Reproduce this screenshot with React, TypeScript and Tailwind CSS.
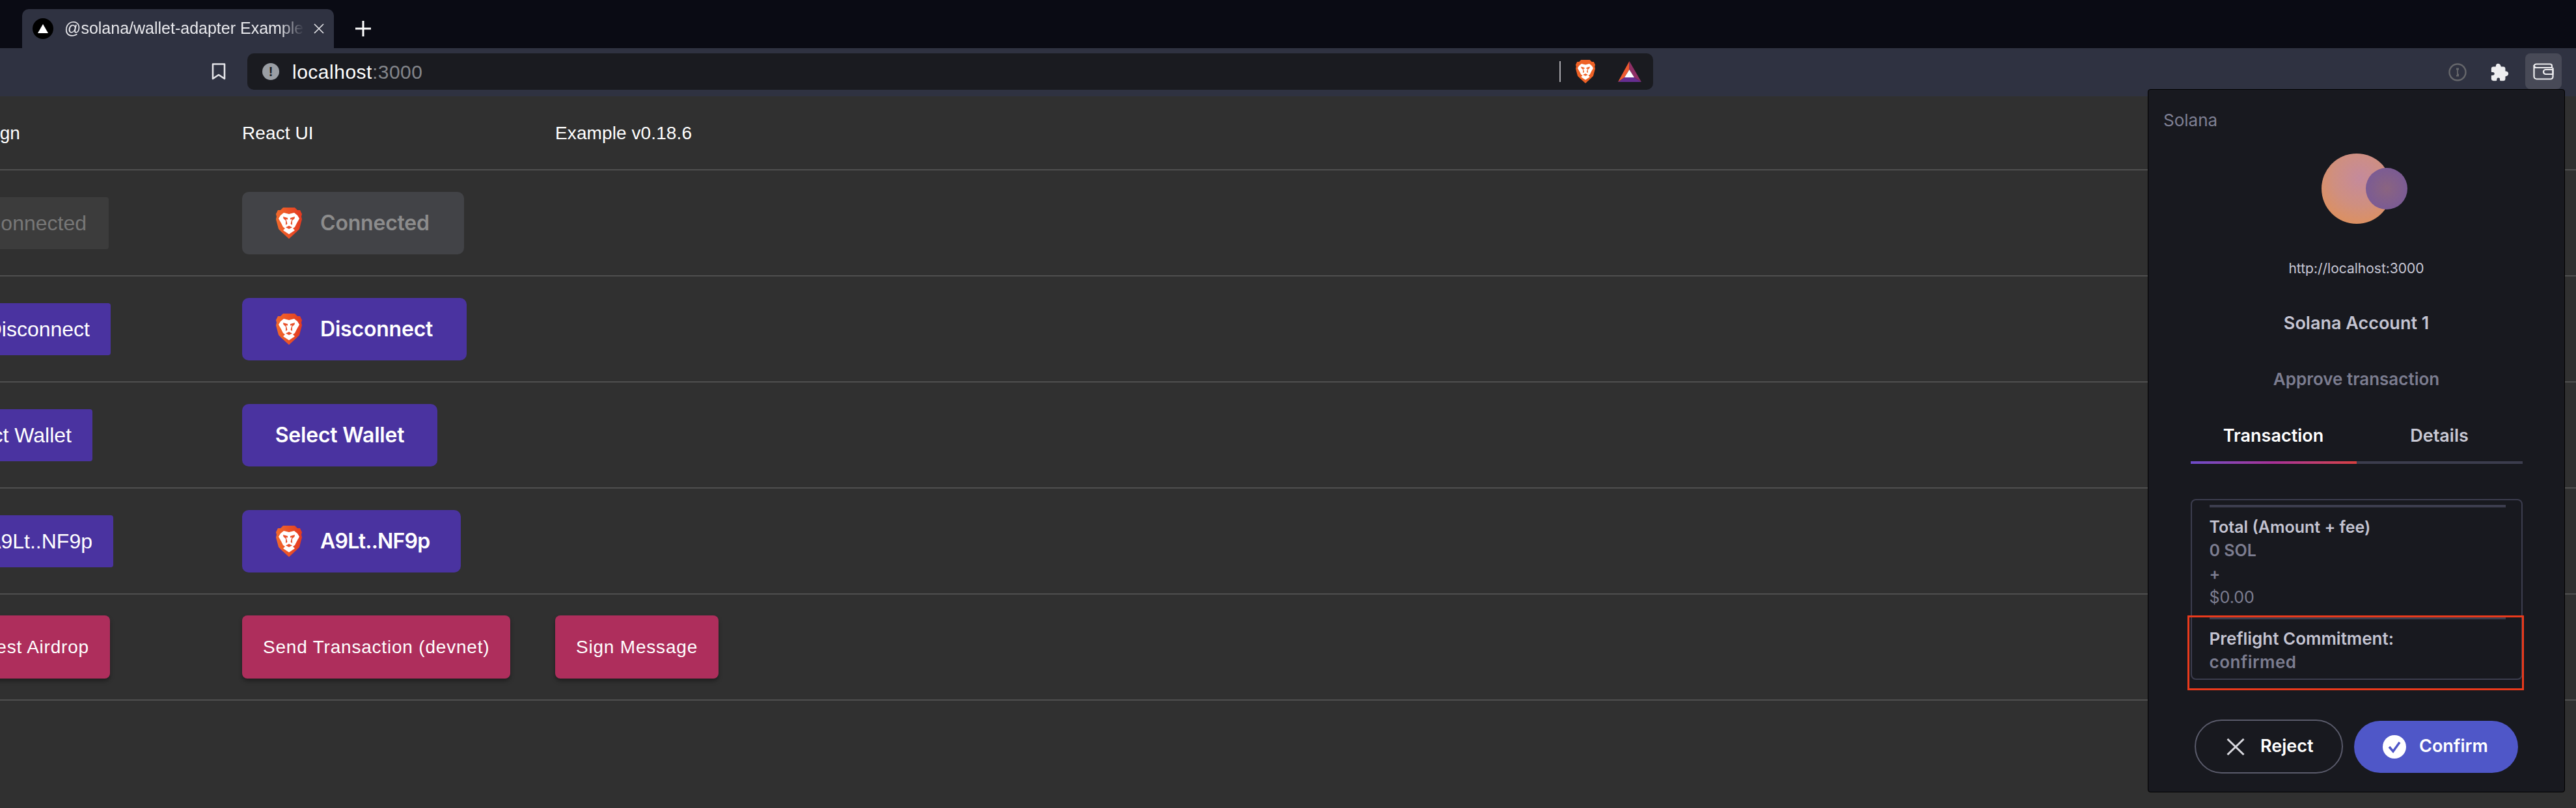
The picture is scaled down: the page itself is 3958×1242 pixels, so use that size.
import React from "react";
import { IoExtensionPuzzle } from "react-icons/io5";

function Brave({ flat, id, className }: { flat?: boolean; id: string; className: string }) {
  return (
    <svg viewBox="0 0 40 48" className={className}>
      <defs>
        <linearGradient id={id} x1="0" y1="0" x2="1" y2="0">
          <stop offset="0" stopColor="#f26a2b" />
          <stop offset="1" stopColor="#e33a22" />
        </linearGradient>
      </defs>
      <path
        d="M11 0H29L33 4L37 4L40 10L39 14L40 18L36 33L31 38L20 48L9 38L4 33L0 18L1 14L0 10L3 4L7 4Z"
        fill={flat ? "#ee6125" : `url(#${id})`}
      />
      <path d="M7 12L12 8L20 10L28 8L33 12L36 17L32 24L29 30L26 32L29 35L20 41L11 35L14 32L11 30L8 24L4 17Z" fill="#fff" />
      <path d="M11 14L18 16V18.500L15.500 18L17.500 25L15 27L15 20L11.500 17Z M29 14L22 16V18.500L24.500 18L22.500 25L25 27L25 20L28.500 17Z M15 30.500L20 28L25 30.500L20 33Z" fill={flat ? "#ee6125" : "#e8502a"} />
    </svg>
  );
}

function Bat() {
  return (
    <svg viewBox="0 0 36 32" className="h-[32px] w-[36px]">
      <polygon points="17.5,0 0,32 10,25 17.5,13" fill="#ee5a30" />
      <polygon points="17.5,0 36,32 25,25 17.5,13" fill="#8f2f66" />
      <polygon points="0,32 36,32 25,25 10,25" fill="#662d91" />
      <polygon points="17.5,13 25,25 10,25" fill="#ffffff" />
    </svg>
  );
}

const lineCol1 = "flex items-center justify-end";
const uiBtn = "flex h-[96px] items-center whitespace-nowrap rounded-[10px] font-['Inter',sans-serif] text-[32px] font-semibold tracking-[-0.2px]";
const oldBtn = "flex h-[80px] shrink-0 items-center whitespace-nowrap rounded-[4px] bg-[#4a33a0] px-[32px] font-['Liberation_Sans',sans-serif] text-[32px] text-white";
const pinkBtn = "flex h-[97px] shrink-0 items-center whitespace-nowrap rounded-[8px] bg-[#ae2e5c] px-[32px] font-['Liberation_Sans',sans-serif] text-[28px] tracking-[0.8px] text-white shadow-[0_4px_6px_rgba(0,0,0,0.35)]";
const row = "grid h-[163px] grid-cols-[372px_481px_1fr] items-center border-b-2 border-[#4f4f4f]";

export default function App() {
  return (
    <div className="relative flex h-[1242px] w-[3958px] flex-col overflow-hidden bg-[#303030] font-['Liberation_Sans',sans-serif]">
      <div className="flex h-[74px] items-start bg-[#0a0b14] pl-[34px] pt-[14px]">
        <div className="flex h-[60px] w-[479px] items-center rounded-t-[10px] bg-[#2f3241] pl-[16px]">
          <div className="flex h-[32px] w-[32px] shrink-0 items-center justify-center rounded-full bg-black">
            <svg viewBox="0 0 16 14" className="h-[14px] w-[16px]"><polygon points="8,0 16,14 0,14" fill="#fff" /></svg>
          </div>
          <div className="ml-[17px] w-[368px] overflow-hidden whitespace-nowrap text-[25px] text-[#e8e8ec] [mask-image:linear-gradient(to_right,black_90%,transparent)]">@solana/wallet-adapter Example</div>
          <svg viewBox="0 0 16 16" className="ml-[15px] h-[16px] w-[16px]"><path d="M1 1L15 15M15 1L1 15" stroke="#e8e8ec" strokeWidth="1.6" /></svg>
        </div>
        <svg viewBox="0 0 24 24" className="ml-[33px] mt-[18px] h-[24px] w-[24px]"><path d="M12 0V24M0 12H24" stroke="#fff" strokeWidth="3" /></svg>
      </div>

      <div className="flex h-[74px] items-start bg-[#2f3241] pl-[325px] pr-[22px] pt-[8px]">
        <svg viewBox="0 0 22 26" className="mt-[15px] h-[26px] w-[22px]"><path d="M2 1.5H20V24L11 18L2 24Z" fill="none" stroke="#e4e4e8" strokeWidth="2.6" strokeLinejoin="round" /></svg>
        <div className="ml-[33px] flex h-[56px] w-[2160px] items-center rounded-[10px] bg-[#1a1b20] pl-[23px] pr-[18px]">
          <div className="flex h-[26px] w-[26px] items-center justify-center rounded-full bg-[#9a9ea4] text-[20px] font-bold leading-none text-[#1a1b20]">!</div>
          <div className="ml-[20px] text-[30px] tracking-[0.5px] text-white">localhost<span className="text-[#83858a]">:3000</span></div>
          <div className="ml-auto h-[32px] w-[2px] bg-[#a8a8ac]" />
          <Brave flat id="b0" className="ml-[22px] h-[36px] w-[32px]" />
          <div className="ml-[34px]"><Bat /></div>
        </div>
        <svg viewBox="0 0 28 28" className="ml-[1222px] mt-[15px] h-[28px] w-[28px]">
          <circle cx="14" cy="14" r="12.5" fill="none" stroke="#66676b" strokeWidth="2.4" />
          <path d="M12 7.5h4v3h-1.2v6H16v4h-4v-2h1v-8h-1z" fill="#66676b" />
        </svg>
        <IoExtensionPuzzle className="ml-[36px] mt-[14px] h-[30px] w-[30px] text-[#eeeef0]" />
        <div className="ml-[24px] flex h-[55px] w-[56px] items-center justify-center rounded-[8px] bg-[#484a57]">
          <svg viewBox="0 0 32 26" className="h-[26px] w-[32px]" fill="none" stroke="#eeeef0" strokeWidth="2.2" strokeLinejoin="round">
            <path d="M5 1.5H26a3 3 0 0 1 3 3V7H5a3.5 3.5 0 0 1-3.5-3v16.500a4 4 0 0 0 4 4H27a3.500 3.500 0 0 0 3.500-3.500V7" />
            <path d="M1.500 5a3.500 3.500 0 0 1 3.500-3.500" />
            <path d="M30.500 10H19.500a3.500 3.500 0 0 0 0 7H30.500Z" />
          </svg>
        </div>
      </div>

      <div className="flex flex-col text-white">
        <div className="grid h-[114px] grid-cols-[372px_481px_1fr] items-center border-b-2 border-[#4f4f4f] pt-[2px] text-[28px] tracking-[0.1px]">
          <div className="flex justify-end pr-[341px]">Sign</div>
          <div>React UI</div>
          <div>Example v0.18.6</div>
        </div>

        <div className={row}>
          <div className={`${lineCol1} pr-[205px]`}>
            <div className="flex h-[80px] shrink-0 items-center whitespace-nowrap rounded-[4px] bg-[#3c3c3c] px-[34px] text-[32px] text-[#777777]">Connected</div>
          </div>
          <div><div className={`${uiBtn} w-[341px] bg-[#424347] pl-[52px] text-[#8c8c8c]`}><Brave id="b1" className="h-[48px] w-[40px]" /><span className="ml-[28px]">Connected</span></div></div>
          <div />
        </div>

        <div className={row}>
          <div className={`${lineCol1} pr-[202px]`}><div className={oldBtn}>Disconnect</div></div>
          <div><div className={`${uiBtn} w-[345px] bg-[#4a33a0] pl-[52px] text-white`}><Brave id="b2" className="h-[48px] w-[40px]" /><span className="ml-[28px]">Disconnect</span></div></div>
          <div />
        </div>

        <div className={row}>
          <div className={`${lineCol1} pr-[230px]`}><div className={oldBtn}>Select Wallet</div></div>
          <div><div className={`${uiBtn} w-[300px] justify-center bg-[#4a33a0] text-white`}>Select Wallet</div></div>
          <div />
        </div>

        <div className={row}>
          <div className={`${lineCol1} pr-[198px]`}><div className={oldBtn}>A9Lt..NF9p</div></div>
          <div><div className={`${uiBtn} w-[336px] bg-[#4a33a0] pl-[52px] text-white`}><Brave id="b3" className="h-[48px] w-[40px]" /><span className="ml-[28px] tracking-[-0.8px]">A9Lt..NF9p</span></div></div>
          <div />
        </div>

        <div className={row}>
          <div className={`${lineCol1} pr-[203px]`}><div className={pinkBtn}>Request Airdrop</div></div>
          <div className="flex"><div className={pinkBtn}>Send Transaction (devnet)</div></div>
          <div className="flex"><div className={pinkBtn}>Sign Message</div></div>
        </div>
      </div>

      <div className="absolute left-[3300px] top-[137px] flex h-[1081px] w-[641px] flex-col items-center rounded-[4px] border border-black bg-[#18191f] font-['Inter',sans-serif]">
        <div className="ml-[23px] mt-[31px] self-start text-[26px] leading-[32px] text-[#7f8094]">Solana</div>
        <div className="relative mt-[35px] h-[108px] w-[108px] rounded-full bg-[radial-gradient(circle_at_55%_35%,#c48a9c,#cf8f80_45%,#e39150_95%)]">
          <div className="absolute left-[68px] top-[22px] h-[64px] w-[64px] rounded-full bg-[radial-gradient(circle,#8a6480,#76589a_95%)]" />
        </div>
        <div className="mt-[55px] text-[21px] leading-[28px] text-[#c8c8d6]">http://localhost:3000</div>
        <div className="mt-[52px] text-[27px] font-semibold leading-[36px] text-[#c4c4d2]">Solana Account 1</div>
        <div className="mt-[50px] text-[26px] font-semibold leading-[36px] text-[#7c7d90]">Approve transaction</div>
        <div className="mt-[51px] flex w-[510px]">
          <div className="flex-1">
            <div className="pb-[21px] text-center text-[27px] font-semibold leading-[36px] text-white">Transaction</div>
            <div className="h-[4px] bg-gradient-to-r from-[#6d4bc8] via-[#a83097] to-[#d8403f]" />
          </div>
          <div className="flex-1">
            <div className="pb-[21px] text-center text-[27px] font-semibold leading-[36px] text-[#c8c8d4]">Details</div>
            <div className="h-[4px] bg-[#3c3d4e]" />
          </div>
        </div>
        <div className="mt-[54px] h-[278px] w-[510px] rounded-[8px] border-2 border-[#3c3d4e] pl-[27px] pr-[24px] pt-[7px] text-[25px] font-semibold leading-[36px]">
          <div className="h-[4px] bg-[#3c3d4e]" />
          <div className="mt-[12px] text-[#c4c4d2]">Total (Amount + fee)</div>
          <div className="text-[#7c7d90]">0 SOL</div>
          <div className="text-[#7c7d90]">+</div>
          <div className="font-normal text-[#7c7d90]">$0.00</div>
          <div className="mt-[12px] h-[4px] bg-[#3c3d4e]" />
          <div className="mt-[12px] text-[26px] text-[#c4c4d2]">Preflight Commitment:</div>
          <div className="text-[26px] tracking-[0.5px] text-[#7c7d90]">confirmed</div>
        </div>
        <div className="mt-[61px] flex items-center gap-[17px]">
          <div className="flex h-[83px] w-[228px] items-center rounded-full border-2 border-[#5a5b6b] pl-[47px] text-[27px] font-semibold text-white">
            <svg viewBox="0 0 28 26" className="h-[26px] w-[28px]"><path d="M1.500 1L26.500 25M26.500 1L1.500 25" stroke="#d8d8de" strokeWidth="3" /></svg>
            <span className="ml-[24px]">Reject</span>
          </div>
          <div className="flex h-[80px] w-[252px] items-center rounded-full bg-[#4f57c8] pl-[44px] text-[27px] font-semibold text-white">
            <svg viewBox="0 0 36 36" className="h-[36px] w-[36px]"><circle cx="18" cy="18" r="18" fill="#fff" /><path d="M10 18L16 25L26 11" fill="none" stroke="#4f57c8" strokeWidth="3.500" /></svg>
            <span className="ml-[20px]">Confirm</span>
          </div>
        </div>
        <div className="absolute left-[60px] top-[808px] h-[115px] w-[517px] border-[3px] border-[#ea3a1c]" />
      </div>
    </div>
  );
}
